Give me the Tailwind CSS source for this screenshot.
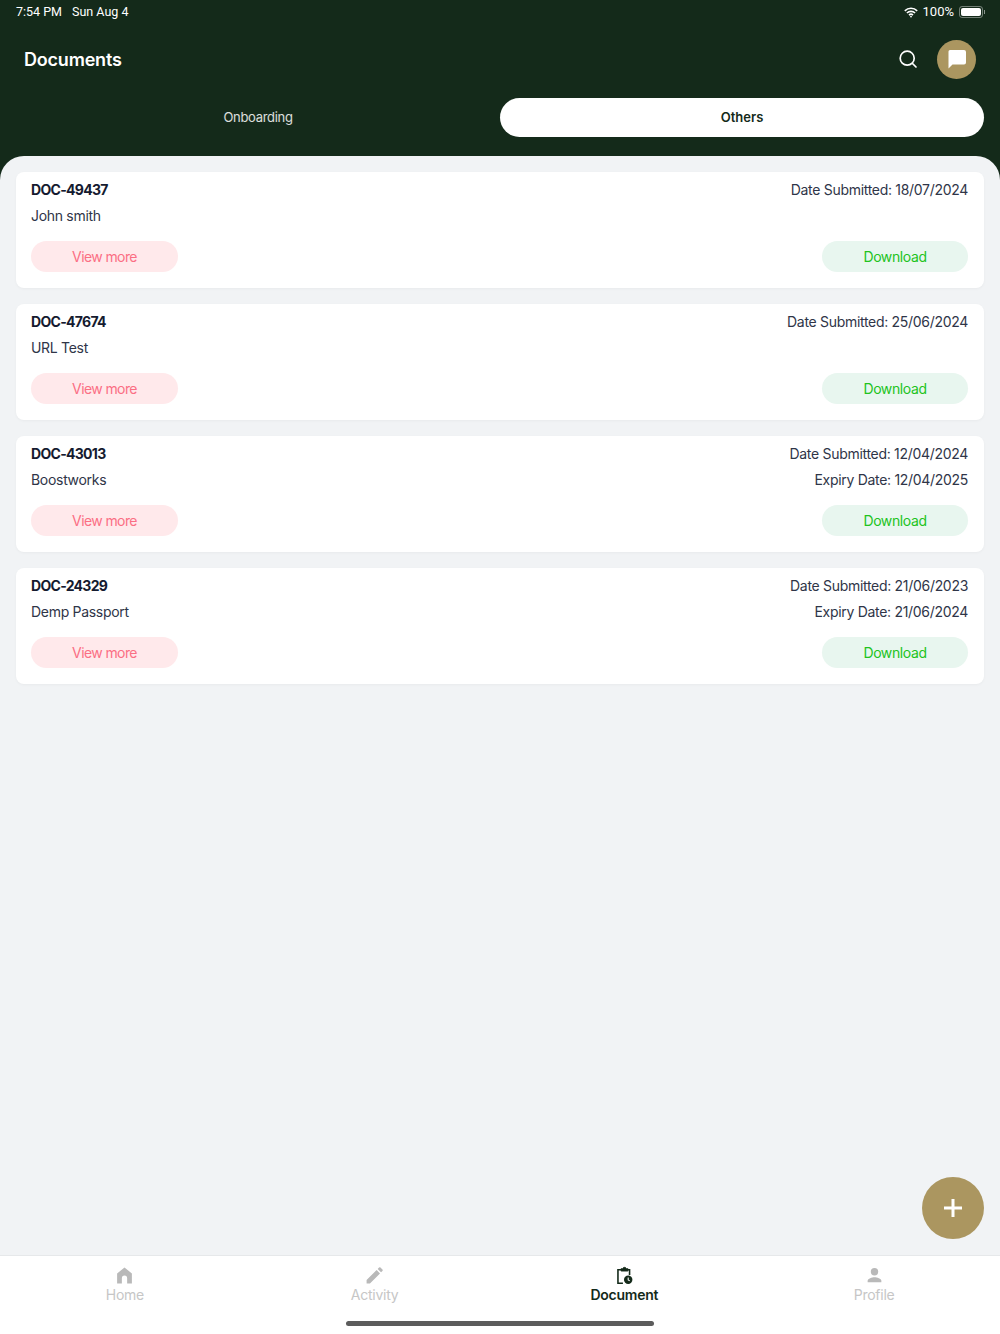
<!DOCTYPE html>
<html lang="en">
<head>
    <meta charset="UTF-8">
    <title>Documents</title>
    <script src="https://cdn.jsdelivr.net/npm/@tailwindcss/browser@4"></script>
</head>
<body class="font-['Inter',sans-serif] bg-[#f1f3f5]">
<div class="relative w-[1000px] h-[1334px] flex flex-col overflow-hidden">

    <!-- header -->
    <header class="h-[180px] shrink-0 bg-[#142a1a] text-white">
        <div class="h-6 pl-4 pr-[15px] flex items-center justify-between text-[12.5px] font-['Roboto',sans-serif]">
            <div class="flex gap-[10px]"><span>7:54 PM</span><span>Sun Aug 4</span></div>
            <div class="flex items-center gap-[5px]">
                <svg class="w-[14px] h-[11px]" viewBox="0 0 14 11" fill="none" stroke="#fff" stroke-width="1.6"><path d="M.8 3.800a9 9 0 0 1 12.4 0M2.900 6a6 6 0 0 1 8.200 0M5 8.100a3 3 0 0 1 4 0"/><circle cx="7" cy="9.600" r=".9" fill="#fff" stroke="none"/></svg>
                <span class="text-[13px]">100%</span>
                <div class="flex items-center">
                    <div class="w-[24px] h-[12px] rounded-[3px] border border-white/40 p-px"><div class="w-full h-full rounded-[2px] bg-white"></div></div>
                    <div class="w-px h-1 ml-px bg-white/50"></div>
                </div>
            </div>
        </div>
        <div class="h-[70px] pl-6 pr-6 flex items-center justify-between">
            <h1 class="text-[18px] font-semibold tracking-[-0.2px] mt-px">Documents</h1>
            <div class="flex items-center gap-[19px]">
                <svg class="w-[20px] h-[20px]" viewBox="0 0 20 20" fill="none" stroke="#fff" stroke-width="1.7" stroke-linecap="round"><circle cx="9.200" cy="9.200" r="7"/><path d="M14.500 14.500l3.500 3.500"/></svg>
                <div class="w-[39px] h-[39px] rounded-full bg-[#ab9660] flex items-center justify-center">
                    <svg class="w-[24px] h-[24px]" viewBox="0 0 24 24" fill="#fff"><path d="M5 3h14a2 2 0 0 1 2 2v10.500a2 2 0 0 1-2 2H7.500L3.500 21.500V4.500A1.500 1.500 0 0 1 5 3z"/></svg>
                </div>
            </div>
        </div>
        <div class="px-4 pt-[4px] grid grid-cols-2 text-[13px]">
            <div class="h-[39px] flex items-center justify-center text-white/85 tracking-[-0.3px]">Onboarding</div>
            <div class="h-[39px] rounded-full bg-white flex items-center justify-center font-semibold text-[#142a1a]">Others</div>
        </div>
    </header>

    <!-- list -->
    <main class="flex-1 -mt-6 rounded-t-[24px] bg-[#f1f3f5] px-4 pt-4 flex flex-col gap-4">
        <div class="h-[116px] rounded-lg bg-white shadow-[0_1px_3px_rgba(0,0,0,0.04)] pl-[15px] pr-4 pt-2 text-[14px] tracking-[-0.3px] text-[#2f3548]">
            <div class="flex justify-between h-[19px] items-center"><b class="font-bold tracking-[-0.7px] text-[#151b30]">DOC-49437</b><span>Date Submitted: 18/07/2024</span></div>
            <div class="flex justify-between h-[19px] items-center mt-[7px]"><span>John smith</span></div>
            <div class="flex justify-between mt-4">
                <button class="w-[147px] h-[31px] rounded-full bg-[#ffe9eb] text-[#fb6f84] tracking-[-0.6px]">View more</button>
                <button class="w-[146px] h-[31px] rounded-full bg-[#e8f6ef] text-[#22c31d] tracking-[-0.4px]">Download</button>
            </div>
        </div>
        <div class="h-[116px] rounded-lg bg-white shadow-[0_1px_3px_rgba(0,0,0,0.04)] pl-[15px] pr-4 pt-2 text-[14px] tracking-[-0.3px] text-[#2f3548]">
            <div class="flex justify-between h-[19px] items-center"><b class="font-bold tracking-[-0.7px] text-[#151b30]">DOC-47674</b><span>Date Submitted: 25/06/2024</span></div>
            <div class="flex justify-between h-[19px] items-center mt-[7px]"><span>URL Test</span></div>
            <div class="flex justify-between mt-4">
                <button class="w-[147px] h-[31px] rounded-full bg-[#ffe9eb] text-[#fb6f84] tracking-[-0.6px]">View more</button>
                <button class="w-[146px] h-[31px] rounded-full bg-[#e8f6ef] text-[#22c31d] tracking-[-0.4px]">Download</button>
            </div>
        </div>
        <div class="h-[116px] rounded-lg bg-white shadow-[0_1px_3px_rgba(0,0,0,0.04)] pl-[15px] pr-4 pt-2 text-[14px] tracking-[-0.3px] text-[#2f3548]">
            <div class="flex justify-between h-[19px] items-center"><b class="font-bold tracking-[-0.7px] text-[#151b30]">DOC-43013</b><span>Date Submitted: 12/04/2024</span></div>
            <div class="flex justify-between h-[19px] items-center mt-[7px]"><span>Boostworks</span><span>Expiry Date: 12/04/2025</span></div>
            <div class="flex justify-between mt-4">
                <button class="w-[147px] h-[31px] rounded-full bg-[#ffe9eb] text-[#fb6f84] tracking-[-0.6px]">View more</button>
                <button class="w-[146px] h-[31px] rounded-full bg-[#e8f6ef] text-[#22c31d] tracking-[-0.4px]">Download</button>
            </div>
        </div>
        <div class="h-[116px] rounded-lg bg-white shadow-[0_1px_3px_rgba(0,0,0,0.04)] pl-[15px] pr-4 pt-2 text-[14px] tracking-[-0.3px] text-[#2f3548]">
            <div class="flex justify-between h-[19px] items-center"><b class="font-bold tracking-[-0.7px] text-[#151b30]">DOC-24329</b><span>Date Submitted: 21/06/2023</span></div>
            <div class="flex justify-between h-[19px] items-center mt-[7px]"><span>Demp Passport</span><span>Expiry Date: 21/06/2024</span></div>
            <div class="flex justify-between mt-4">
                <button class="w-[147px] h-[31px] rounded-full bg-[#ffe9eb] text-[#fb6f84] tracking-[-0.6px]">View more</button>
                <button class="w-[146px] h-[31px] rounded-full bg-[#e8f6ef] text-[#22c31d] tracking-[-0.4px]">Download</button>
            </div>
        </div>
    </main>

    <!-- add button -->
    <button class="absolute left-[922px] top-[1177px] w-[62px] h-[62px] rounded-full bg-[#ab9660] flex items-center justify-center">
        <svg class="w-[18px] h-[18px]" viewBox="0 0 18 18" stroke="#fff" stroke-width="3"><path d="M9 0v18M0 9h18"/></svg>
    </button>

    <!-- tab bar -->
    <nav class="relative h-[79px] shrink-0 bg-white border-t border-[#e6e8ea] pr-px grid grid-cols-4 text-[14px] tracking-[-0.25px] text-[#c6c6c6]">
        <div class="flex flex-col items-center pt-[10px]">
            <svg class="w-[19px] h-[19px]" viewBox="0 0 18 18" fill="#b9b9b9"><path d="M9 1.500l7 5.500v9.500h-4.500v-5a2.500 2.500 0 0 0-5 0v5H2V7z"/></svg>
            <span class="leading-[18px] mt-px">Home</span>
        </div>
        <div class="flex flex-col items-center pt-[10px]">
            <svg class="w-[19px] h-[19px]" viewBox="0 0 18 18" fill="#b9b9b9"><path d="M1.500 16.500v-3.200L11 3.800l3.200 3.200-9.500 9.500zM12 2.800l1.300-1.300a1 1 0 0 1 1.400 0l1.800 1.800a1 1 0 0 1 0 1.400L15.200 6z"/></svg>
            <span class="leading-[18px] mt-px">Activity</span>
        </div>
        <div class="flex flex-col items-center pt-[10px] font-semibold text-[#142a1a]">
            <svg class="w-[19px] h-[19px]" viewBox="0 0 18 18" fill="none" stroke="#142a1a" stroke-width="1.500"><path d="M7.500 16.300H2.800V3.500h11V8.500"/><path d="M5.800 4.800V2.500h1.500a1.800 1.800 0 0 1 3.400 0h1.500v2.300z" fill="#142a1a" stroke-width=".8"/><circle cx="12.500" cy="13" r="4" fill="#142a1a" stroke="none"/><path d="M12.500 10.800v2.400l1.500.9" stroke="#fff" stroke-width="1"/></svg>
            <span class="leading-[18px] mt-px">Document</span>
        </div>
        <div class="flex flex-col items-center pt-[10px]">
            <svg class="w-[19px] h-[19px]" viewBox="0 0 18 18" fill="#b9b9b9"><circle cx="9" cy="5.500" r="3.500"/><path d="M2.500 15.500v-1.300c0-2.300 4.300-3.500 6.500-3.500s6.500 1.200 6.500 3.500v1.300z"/></svg>
            <span class="leading-[18px] mt-px">Profile</span>
        </div>
        <div class="absolute left-[346px] bottom-[8px] w-[308px] h-[5px] rounded-full bg-[#5c5c5c]"></div>
    </nav>
</div>
</body>
</html>
